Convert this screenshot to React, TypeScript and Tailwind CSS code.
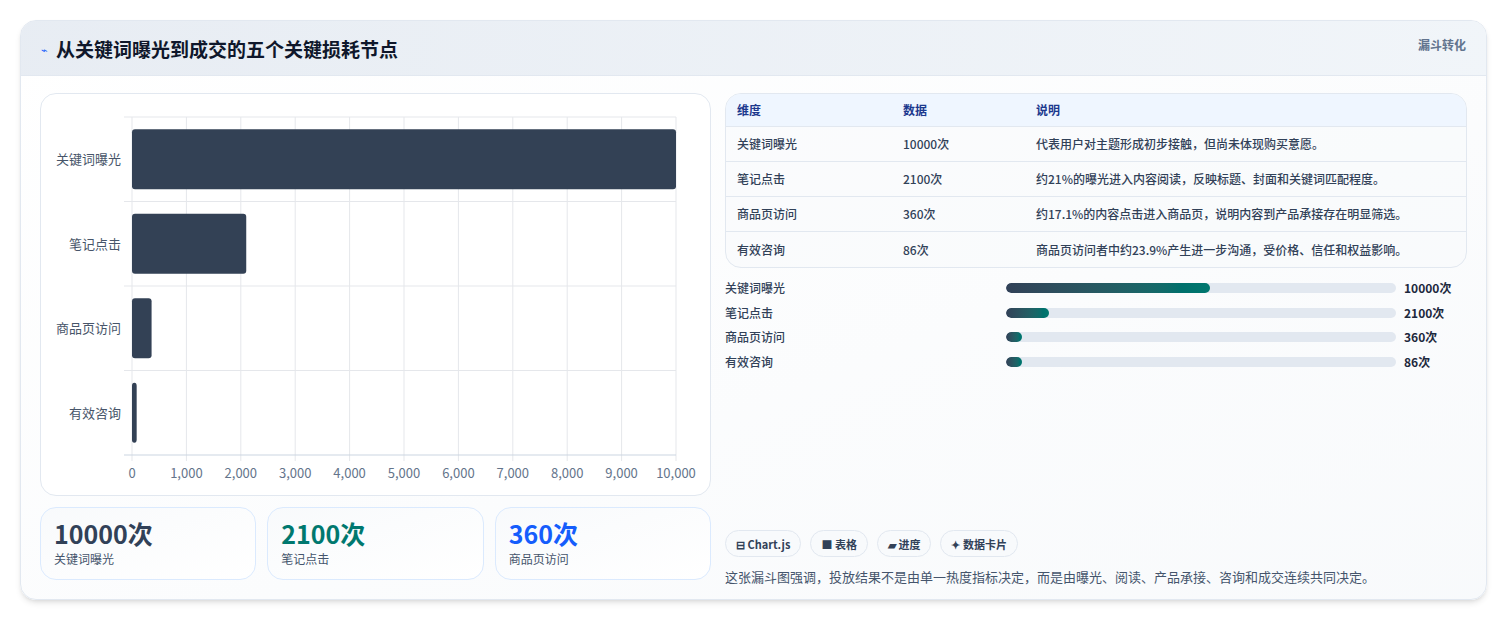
import React from "react";

const F = { fontFamily: '"Noto Sans CJK SC", "Noto Sans", sans-serif' };

const rows = [
  ["关键词曝光", "10000次", "代表用户对主题形成初步接触，但尚未体现购买意愿。"],
  ["笔记点击", "2100次", "约21%的曝光进入内容阅读，反映标题、封面和关键词匹配程度。"],
  ["商品页访问", "360次", "约17.1%的内容点击进入商品页，说明内容到产品承接存在明显筛选。"],
  ["有效咨询", "86次", "商品页访问者中约23.9%产生进一步沟通，受价格、信任和权益影响。"],
];
const fills = [204, 43, 16, 16];
const vals = [10000, 2100, 360, 86];

function Chart() {
  const x0 = 91, w = 544, y0 = 23, h = 338, rh = h / 4;
  return (
    <svg width="669" height="401" style={F}>
      {Array.from({ length: 11 }).map((_, i) => (
        <g key={i}>
          <line x1={x0 + (w * i) / 10} x2={x0 + (w * i) / 10} y1={y0} y2={y0 + h + 6} stroke="#e5e7eb" />
          <text x={x0 + (w * i) / 10} y={384} textAnchor="middle" fontSize="13" fill="#64748b">
            {(i * 1000).toLocaleString("en-US")}
          </text>
        </g>
      ))}
      {[0, 1, 2, 3, 4].map((i) => (
        <line key={i} x1={x0 - 8} x2={x0 + w} y1={y0 + rh * i} y2={y0 + rh * i} stroke={i === 4 ? "#cbd5e1" : "#e5e7eb"} />
      ))}
      {rows.map((r, i) => {
        const cy = y0 + rh * (i + 0.5);
        return (
          <g key={i}>
            <text x={80} y={cy + 5} textAnchor="end" fontSize="13" fill="#475569">{r[0]}</text>
            <rect x={x0} y={cy - 30} width={Math.max(4, (w * vals[i]) / 10000)} height={60} rx={3} fill="#334155" />
          </g>
        );
      })}
    </svg>
  );
}

export default function App() {
  return (
    <div className="w-[1507px] h-[620px] bg-white pt-5 pl-5" style={F}>
      <div className="w-[1467px] h-[580px] rounded-2xl border border-slate-200 shadow-md overflow-hidden bg-gradient-to-br from-white to-slate-50 flex flex-col">
        <div className="h-[55px] shrink-0 bg-gradient-to-r from-slate-200/80 to-slate-100 border-b border-slate-200 flex items-start justify-between px-5">
          <div className="flex items-center gap-2 mt-[14px]">
            <span className="text-[11px] text-blue-600">⌁</span>
            <span className="text-[19px] font-bold text-slate-900">从关键词曝光到成交的五个关键损耗节点</span>
          </div>
          <span className="mt-[15px] text-[12px] font-semibold text-slate-500">漏斗转化</span>
        </div>
        <div className="flex gap-[14px] px-[19px] pt-[17px]">
          <div className="w-[671px] flex flex-col gap-[11px]">
            <div className="h-[403px] rounded-2xl border border-slate-200 bg-white">
              <Chart />
            </div>
            <div className="flex gap-[11px]">
              {[
                ["10000次", "关键词曝光", "text-slate-700"],
                ["2100次", "笔记点击", "text-teal-700"],
                ["360次", "商品页访问", "text-blue-600"],
              ].map(([v, l, c]) => (
                <div key={l} className="flex-1 h-[73px] rounded-2xl border border-blue-100 bg-gradient-to-br from-slate-50 to-white px-[13px] pt-[9px]">
                  <div className={`text-[25px] font-bold leading-[32px] ${c}`}>{v}</div>
                  <div className="text-[12px] text-slate-600 mt-[1px]">{l}</div>
                </div>
              ))}
            </div>
          </div>
          <div className="w-[743px] flex flex-col">
            <div className="rounded-2xl border border-slate-200 overflow-hidden bg-slate-50/50">
              <div className="h-[33px] bg-blue-50 border-b border-slate-200 flex items-center text-[12px] font-semibold text-blue-900">
                <span className="w-[177px] pl-[11px]">维度</span>
                <span className="w-[133px]">数据</span>
                <span>说明</span>
              </div>
              {rows.map((r, i) => (
                <div key={i} className={`h-[35px] flex items-center text-[12px] font-medium text-slate-700 ${i < 3 ? "border-b border-slate-200" : ""}`}>
                  <span className="w-[177px] pl-[11px]">{r[0]}</span>
                  <span className="w-[133px]">{r[1]}</span>
                  <span>{r[2]}</span>
                </div>
              ))}
            </div>
            <div className="mt-[8px] flex flex-col">
              {rows.map((r, i) => (
                <div key={i} className="h-[24.6px] flex items-center text-[12px] font-medium text-slate-700">
                  <span className="w-[281px]">{r[0]}</span>
                  <div className="w-[390px] h-[10px] rounded-full bg-slate-200 overflow-hidden">
                    <div className="h-full rounded-full bg-gradient-to-r from-slate-700 to-teal-700" style={{ width: fills[i] }} />
                  </div>
                  <span className="ml-[8px] font-bold text-slate-800">{r[1]}</span>
                </div>
              ))}
            </div>
            <div className="mt-[156px] flex gap-[9px] text-[11px] font-semibold text-slate-700">
              {["⊟ Chart.js", "■ 表格", "▰ 进度", "✦ 数据卡片"].map((t) => (
                <span key={t} className="h-[27px] px-[10px] rounded-full border border-slate-200 bg-slate-50 flex items-center">{t}</span>
              ))}
            </div>
            <div className="mt-[10px] text-[13px] text-slate-600">这张漏斗图强调，投放结果不是由单一热度指标决定，而是由曝光、阅读、产品承接、咨询和成交连续共同决定。</div>
          </div>
        </div>
      </div>
    </div>
  );
}
